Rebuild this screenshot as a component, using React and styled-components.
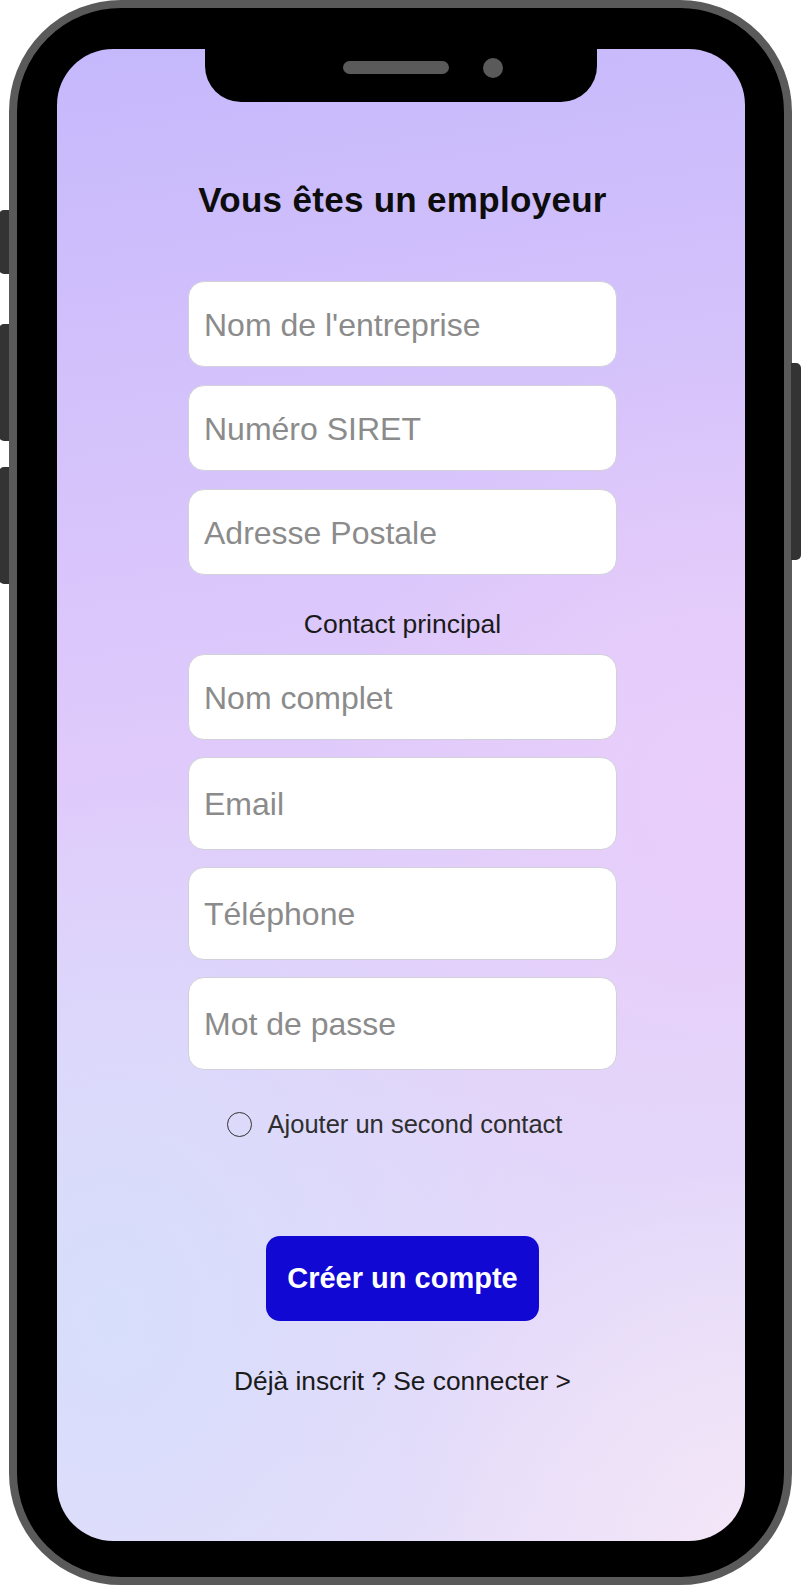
import React from "react";
import styled, { createGlobalStyle } from "styled-components";

const GlobalStyle = createGlobalStyle`
	html, body {
		margin: 0;
		padding: 0;
		background: #ffffff;
	}
	body {
		font-family: "Liberation Sans", Arial, Helvetica, sans-serif;
	}
	* {
		box-sizing: border-box;
	}
`;

const App = () => {
	return (
		<>
			<GlobalStyle />
			<Stage>
				<Phone>
					<SideButton side="left" top={210} height={64} />
					<SideButton side="left" top={324} height={117} />
					<SideButton side="left" top={467} height={117} />
					<SideButton side="right" top={363} height={197} />
					<Screen>
						<Notch>
							<Speaker />
							<Camera />
						</Notch>
						<Form>
							<Title>Vous êtes un employeur</Title>
							<FieldGroup gap={18}>
								<Field placeholder="Nom de l'entreprise" />
								<Field placeholder="Numéro SIRET" />
								<Field placeholder="Adresse Postale" />
							</FieldGroup>
							<SectionLabel>Contact principal</SectionLabel>
							<FieldGroup gap={17}>
								<Field placeholder="Nom complet" />
								<Field tall placeholder="Email" />
								<Field tall placeholder="Téléphone" />
								<Field tall type="password" placeholder="Mot de passe" />
							</FieldGroup>
							<RadioRow>
								<Radio />
								<span>Ajouter un second contact</span>
							</RadioRow>
							<SubmitButton>Créer un compte</SubmitButton>
							<LoginLink>Déjà inscrit ? Se connecter &gt;</LoginLink>
						</Form>
					</Screen>
				</Phone>
			</Stage>
		</>
	);
};

const Stage = styled.div`
	width: 801px;
	height: 1586px;
	padding-left: 9px;
	overflow: hidden;
`;

const Phone = styled.div`
	position: relative;
	width: 783px;
	height: 1585px;
	border: 8px solid #5a5a5a;
	border-radius: 112px;
	background: #000;
	padding: 41px 39px 36px 40px;
`;

const SideButton = styled.div`
	position: absolute;
	top: ${(p) => p.top - 8}px;
	height: ${(p) => p.height}px;
	width: 10px;
	background: #333333;
	${(p) =>
		p.side === "left"
			? "left: -18px; border-radius: 5px 0 0 5px;"
			: "right: -17px; border-radius: 0 5px 5px 0;"}
`;

const Screen = styled.div`
	position: relative;
	width: 100%;
	height: 100%;
	border-radius: 56px;
	overflow: hidden;
	background: radial-gradient(
			ellipse 60% 35% at 8% 85%,
			rgba(214, 222, 252, 0.95),
			rgba(214, 222, 252, 0) 100%
		),
		radial-gradient(
			ellipse 55% 30% at 95% 50%,
			rgba(234, 206, 250, 0.9),
			rgba(234, 206, 250, 0) 100%
		),
		radial-gradient(
			ellipse 50% 25% at 100% 100%,
			rgba(244, 230, 248, 1),
			rgba(244, 230, 248, 0) 100%
		),
		linear-gradient(172deg, #c5b8fc 0%, #d3c1fb 22%, #dfcafb 45%, #e2d6fa 70%, #e6def9 100%);
`;

const Notch = styled.div`
	position: absolute;
	top: 0;
	left: 148px;
	width: 392px;
	height: 53px;
	background: #000;
	border-radius: 0 0 36px 36px;
	display: flex;
	align-items: flex-start;
	gap: 34px;
	padding: 9px 0 0 138px;
`;

const Speaker = styled.div`
	width: 106px;
	height: 13px;
	margin-top: 3px;
	border-radius: 7px;
	background: #5a5a5a;
`;

const Camera = styled.div`
	width: 20px;
	height: 20px;
	border-radius: 50%;
	background: #5a5a5a;
`;

const Form = styled.div`
	display: flex;
	flex-direction: column;
	align-items: center;
	padding-top: 131px;
	padding-left: 3px;
`;

const Title = styled.h1`
	margin: 0 0 61px;
	font-size: 35px;
	line-height: 40px;
	font-weight: bold;
	color: #0d0d0d;
	letter-spacing: 0.3px;
`;

const FieldGroup = styled.div`
	display: flex;
	flex-direction: column;
	gap: ${(p) => p.gap}px;
	width: 429px;
`;

const Field = styled.input`
	width: 100%;
	height: ${(p) => (p.tall ? "93px" : "86px")};
	border: 1px solid #d2d0d8;
	border-radius: 16px;
	background: #ffffff;
	padding: 2px 15px 0;
	font-family: "Liberation Sans", Arial, sans-serif;
	font-size: 32px;
	color: #222;
	outline: none;
	&::placeholder {
		color: #8b8b8b;
	}
`;

const SectionLabel = styled.p`
	margin: 34px 0 15px;
	font-size: 26.5px;
	line-height: 30px;
	color: #1a1a1a;
`;

const RadioRow = styled.label`
	display: flex;
	align-items: center;
	gap: 16px;
	margin-top: 39px;
	padding-right: 16px;
	height: 30px;
	font-size: 25.5px;
	color: #2e2e2e;
	span {
		line-height: 30px;
	}
`;

const Radio = styled.span`
	width: 25px;
	height: 25px;
	border: 1.8px solid #333;
	border-radius: 50%;
	background: transparent;
`;

const SubmitButton = styled.button`
	margin-top: 97px;
	height: 85px;
	padding: 0 21px;
	border: none;
	border-radius: 14px;
	background: #1208d3;
	color: #ffffff;
	font-family: "Liberation Sans", Arial, sans-serif;
	font-size: 29px;
	font-weight: bold;
	cursor: pointer;
`;

const LoginLink = styled.a`
	margin-top: 45px;
	font-size: 26.3px;
	line-height: 30px;
	color: #1a1a1a;
	text-decoration: none;
	cursor: pointer;
`;

export default App;
